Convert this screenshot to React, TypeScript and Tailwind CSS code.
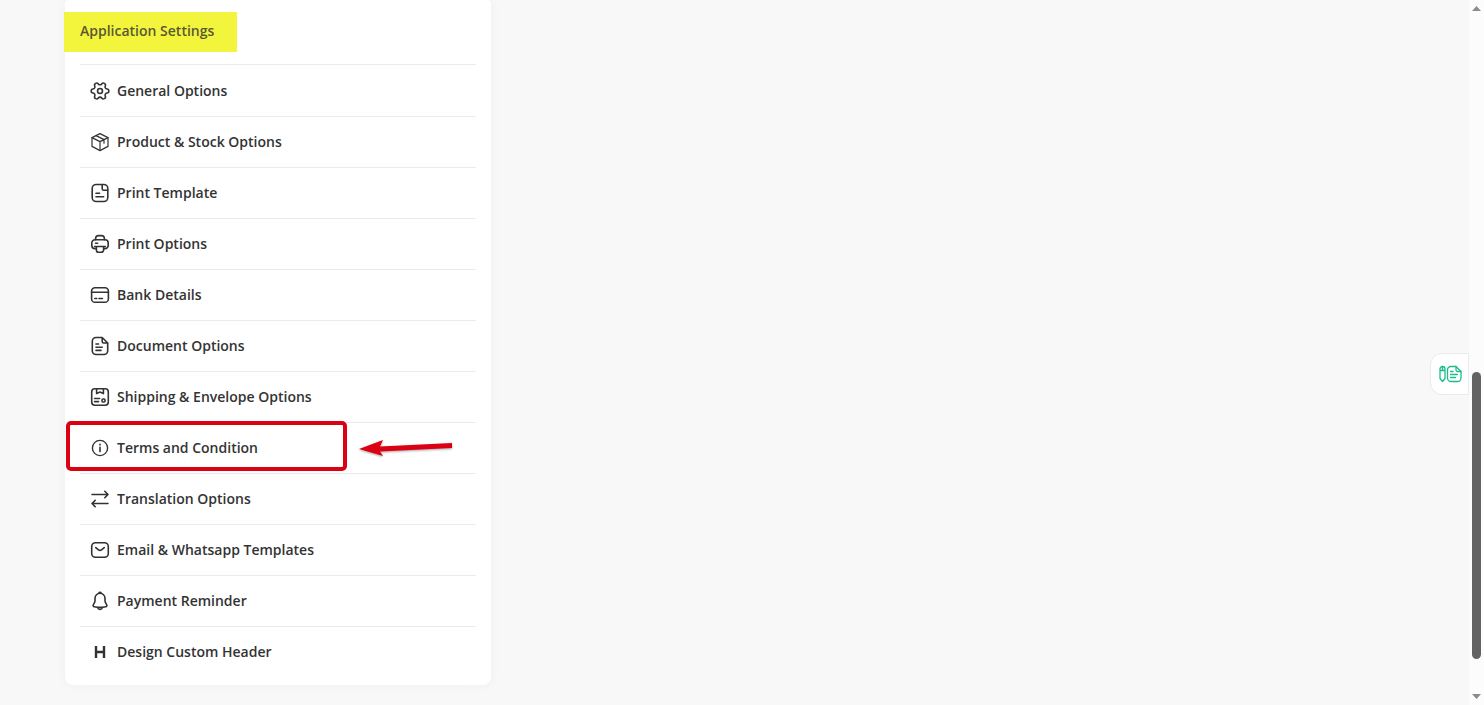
import type { ReactNode } from 'react'

type Item = { label: string; icon: ReactNode; marked?: boolean }

const items: Item[] = [
  {
    label: 'General Options',
    icon: (
      <g transform="rotate(90 10 10) translate(-0.6 -0.6) scale(0.883)" strokeWidth="1.8">
        <path d="M9.671 4.136a2.34 2.34 0 0 1 4.659 0 2.34 2.34 0 0 0 3.319 1.915 2.34 2.34 0 0 1 2.33 4.033 2.34 2.34 0 0 0 0 3.831 2.34 2.34 0 0 1-2.33 4.033 2.34 2.34 0 0 0-3.319 1.915 2.34 2.34 0 0 1-4.659 0 2.34 2.34 0 0 0-3.32-1.915 2.34 2.34 0 0 1-2.33-4.033 2.34 2.34 0 0 0 0-3.831A2.34 2.34 0 0 1 6.35 6.051a2.34 2.34 0 0 0 3.319-1.915" />
        <circle cx="12" cy="12" r="2.8" />
      </g>
    ),
  },
  {
    label: 'Product & Stock Options',
    icon: (
      <g strokeWidth="1.2">
        <path d="M10 1.6 18 5.6v8.8l-8 4.2-8-4.2V5.6Z" />
        <path d="m2 5.6 8 4 8-4M10 9.6v8.8M6 3.6l8 4v3.6" />
      </g>
    ),
  },
  {
    label: 'Print Template',
    icon: (
      <>
        <rect x="2.2" y="1.5" width="15.6" height="17" rx="4" />
        <path d="M12.2 2v3.8a1.5 1.5 0 0 0 1.5 1.5h3.9M6 10.2h3.6M6 13.8h7.6" />
      </>
    ),
  },
  {
    label: 'Print Options',
    icon: (
      <>
        <path d="M5.6 5.8V4.6a3 3 0 0 1 3-3h2.8a3 3 0 0 1 3 3v1.2" />
        <path d="M5.6 14.6H5a3.2 3.2 0 0 1-3.2-3.2V9A3.2 3.2 0 0 1 5 5.8h10A3.2 3.2 0 0 1 18.2 9v2.4a3.2 3.2 0 0 1-3.2 3.2h-.6" />
        <path d="M4.6 12.5h10.8M5.6 9.2h2M6.4 12.5v3.4a2.4 2.4 0 0 0 2.4 2.4h2.4a2.4 2.4 0 0 0 2.4-2.4v-3.4" />
      </>
    ),
  },
  {
    label: 'Bank Details',
    icon: (
      <>
        <rect x="1.6" y="2.7" width="16.8" height="14.6" rx="3.4" />
        <path d="M1.6 7.2h16.8M4.8 13.5h2M9 13.5h3.4" />
      </>
    ),
  },
  {
    label: 'Document Options',
    icon: (
      <>
        <path d="M12.2 1.5H6.1a3.8 3.8 0 0 0-3.8 3.8v9.4a3.8 3.8 0 0 0 3.8 3.8h7.8a3.8 3.8 0 0 0 3.8-3.8V7Z" />
        <path d="M12.2 1.8v3.6A1.6 1.6 0 0 0 13.8 7h3.6M6 8h2.6M6 11.2h6.2M6 14.4h5" />
      </>
    ),
  },
  {
    label: 'Shipping & Envelope Options',
    icon: (
      <>
        <rect x="1.7" y="1.7" width="16.6" height="16.6" rx="3.2" />
        <path d="M6.6 1.8v4.8L10 5l3.4 1.6V1.8M4.6 11.5h5M4.6 14.6h4" />
        <rect x="12" y="12" width="3" height="3" rx="1" />
      </>
    ),
  },
  {
    label: 'Terms and Condition',
    marked: true,
    icon: (
      <>
        <circle cx="10" cy="10" r="7.6" strokeWidth="1.4" />
        <path d="M10 9.2v4.4M10 6.2v.8" />
      </>
    ),
  },
  {
    label: 'Translation Options',
    icon: <path d="M2 5.5h16M14.8 2.3 18 5.5l-3.2 3.2M18 14.5H2M5.2 11.3 2 14.5l3.2 3.2" />,
  },
  {
    label: 'Email & Whatsapp Templates',
    icon: (
      <>
        <rect x="1.7" y="2.7" width="16.6" height="14.6" rx="3.8" />
        <path d="m5.8 7.6 2.7 2.2a2.4 2.4 0 0 0 3 0l2.7-2.2" />
      </>
    ),
  },
  {
    label: 'Payment Reminder',
    icon: (
      <>
        <path d="M10 2.3a5 5 0 0 0-5 5v2.5c0 1-.3 1.6-.9 2.6l-.8 1.4c-.5.9 0 1.8 1 2 3.7.7 7.7.7 11.4 0 1-.2 1.5-1.1 1-2l-.8-1.4c-.6-1-.9-1.6-.9-2.6V7.300a5 5 0 0 0-5-5Z" />
        <path d="M8.8 2.2a1.3 1.3 0 0 1 2.4 0M7.6 16.600a2.5 2.5 0 0 0 4.800 0" />
      </>
    ),
  },
  {
    label: 'Design Custom Header',
    icon: <path d="M6 4v12M14 4v12M6 10h8" strokeWidth="2.4" strokeLinecap="butt" />,
  },
]

function Marker() {
  return (
    <>
      <span className="pointer-events-none absolute -left-3.5 -top-0.5 h-[50px] w-[281px] rounded-[5px] border-4 border-[#db0012]" />
      <svg className="pointer-events-none absolute left-[279px] top-[15px] drop-shadow-[0_1px_1px_rgba(0,0,0,0.35)]" width="95" height="20" viewBox="0 0 95 20" aria-hidden="true">
        <path d="M0 11 24 2l-3 6.500L93 5v5l-72 3.500 3 4.500Z" fill="#db0012" />
      </svg>
    </>
  )
}

function SettingsRow({ item }: { item: Item }) {
  return (
    <li className="relative h-[51px] border-t border-[#ebebeb] first:border-t-0">
      <a href="#" className="flex h-full items-center gap-[7px] pl-2.5 text-sm font-semibold text-[#333]">
        <svg width="20" height="20" viewBox="0 0 20 20" fill="none" stroke="currentColor" strokeWidth="1.6" strokeLinecap="round" strokeLinejoin="round" aria-hidden="true">
          {item.icon}
        </svg>
        {item.label}
      </a>
      {item.marked && <Marker />}
    </li>
  )
}

function ScrollTrack() {
  return (
    <div className="flex w-[15px] shrink-0 flex-col items-center bg-[#fcfcfc] py-1.5" aria-hidden="true">
      <svg width="9" height="5" viewBox="0 0 9 5"><path d="M4.5 0 9 5H0Z" fill="#8b8b8b" /></svg>
      <div className="grow-[360]" />
      <div className="w-[9px] grow-[287] rounded-full bg-[#636363]" />
      <div className="grow-[35]" />
      <svg width="9" height="5" viewBox="0 0 9 5"><path d="M0 0h9L4.5 5Z" fill="#8b8b8b" /></svg>
    </div>
  )
}

export default function App() {
  return (
    <div className="flex min-h-screen bg-[#f8f8f8] font-['Open_Sans',sans-serif]">
      <main className="relative flex-1 pb-5 pl-[65px]">
        <section className="w-full max-w-[426px] rounded-b-lg rounded-t-sm bg-white px-[15px] pb-2 shadow-[0_0_12px_rgba(0,0,0,0.04)]">
          <header className="flex h-[65px] border-b border-[#ebebeb] py-3">
            <h2 className="-ml-4 flex h-10 items-center bg-[#f3f53c] pb-0.5 pl-4 pr-[23px] text-sm font-semibold text-[#5a5832]">
              Application Settings
            </h2>
          </header>
          <ul>
            {items.map(item => (
              <SettingsRow key={item.label} item={item} />
            ))}
          </ul>
        </section>

        <button
          type="button"
          aria-label="Open notes"
          className="absolute right-0 top-[353px] flex h-[42px] w-[39px] items-center justify-center rounded-l-xl border border-[#ebebeb] bg-white"
        >
          <svg width="24" height="20" viewBox="0 0 24 20" fill="none" stroke="#1abc8c" strokeWidth="1.3" strokeLinecap="round" strokeLinejoin="round" aria-hidden="true">
            <path d="M2 5a2.500 2.500 0 0 1 5 0v9.500l-2.500 3-2.500-3ZM2 6.500h5M4.500 2.500V6" />
            <path d="M18 2.500h-5A3.500 3.500 0 0 0 9.500 6v8a3.500 3.500 0 0 0 3.500 3.500h6.500A3.500 3.500 0 0 0 23 14V7.500Z" />
            <path d="M18 2.500V6a1.500 1.500 0 0 0 1.500 1.500H23M12.500 7.500H15M12.500 10.500h7M12.500 13.500h5" />
          </svg>
        </button>
      </main>
      <ScrollTrack />
    </div>
  )
}
